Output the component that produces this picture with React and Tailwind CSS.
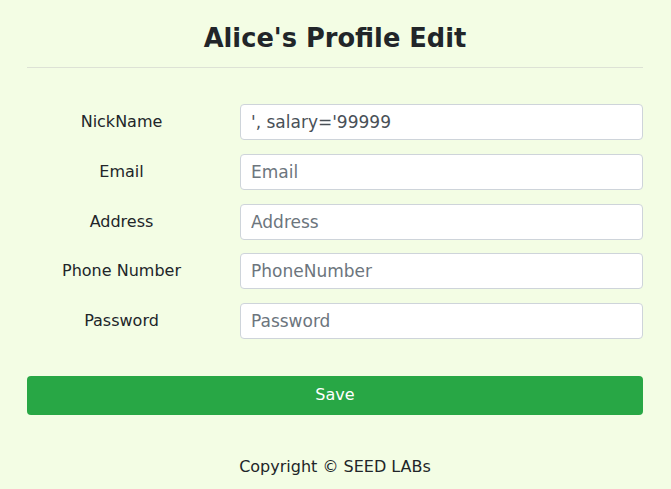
import React from 'react';

const fields = [
  { label: 'NickName', placeholder: 'NickName', value: "', salary='99999" },
  { label: 'Email', placeholder: 'Email' },
  { label: 'Address', placeholder: 'Address' },
  { label: 'Phone Number', placeholder: 'PhoneNumber' },
  { label: 'Password', placeholder: 'Password', type: 'password' },
];

const App = () => {
  return (
    <div className="min-h-[489px] bg-[#f3fde4] text-[#212529] font-['DejaVu_Sans',sans-serif]">
      <div className="ml-[27px] mr-[28px] pt-[20px]">
        <h2 className="text-center text-[25.7px] font-bold leading-[36px]">Alice's Profile Edit</h2>
        <hr className="mt-[11px] border-t border-[#dde2d5]" />

        <form className="mt-[36px] flex flex-col gap-[13.75px]">
          {fields.map((f) => (
            <div key={f.label} className="flex items-center">
              <label className="w-[189px] shrink-0 text-center text-[16px]">{f.label}</label>
              <input
                type={f.type || 'text'}
                placeholder={f.placeholder}
                defaultValue={f.value}
                className="ml-[24px] flex-1 h-[36px] px-[10px] bg-white border border-[#ced4da] rounded-[4px] text-[17px] text-[#495057] placeholder:text-[#6c757d] outline-none"
              />
            </div>
          ))}

          <button
            type="button"
            className="mt-[23px] h-[39px] w-full rounded-[4px] bg-[#28a745] text-white text-[16px]"
          >
            Save
          </button>
        </form>

        <p className="mt-[40px] text-center text-[16px]">Copyright © SEED LABs</p>
      </div>
    </div>
  );
};

export default App;
